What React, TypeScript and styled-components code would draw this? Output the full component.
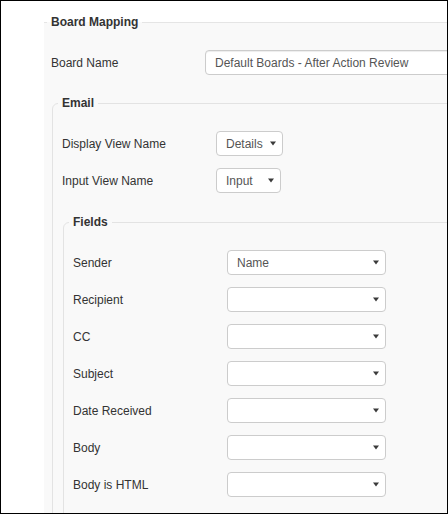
import React from "react";
import styled, { createGlobalStyle } from "styled-components";

const GlobalStyle = createGlobalStyle`
  html, body {
    margin: 0;
    padding: 0;
    background: #fff;
  }
  body {
    font-family: "Liberation Sans", Arial, sans-serif;
    font-size: 12px;
    color: #333;
  }
`;

const Frame = styled.div`
  width: 448px;
  height: 514px;
  box-sizing: border-box;
  border: 1px solid #000;
  background: #fff;
  overflow: hidden;
`;

type BoxProps = {
  $top: number;
  $left: number;
  $pad: number;
  $outer?: boolean;
};

const Box = styled.fieldset<BoxProps>`
  margin: ${(p) => p.$top}px 0 0 ${(p) => p.$left}px;
  padding: 21px 0 0 ${(p) => p.$pad}px;
  min-inline-size: 0;
  width: 560px;
  box-sizing: border-box;
  ${(p) =>
    p.$outer
      ? `border: 0; border-top: 1px solid #e5e5e5; background: #f9f9f9; height: 600px;`
      : `border: 1px solid #e3e3e3; border-radius: 6px 0 0 0; height: 600px;`}
`;

const Legend = styled.legend`
  font-weight: bold;
  font-size: 12px;
  line-height: 14px;
  color: #333;
  padding: 0 4px;
  margin-left: -4px;
`;

const Rows = styled.div`
  display: flex;
  flex-direction: column;
  gap: 12px;
`;

const Row = styled.div`
  display: flex;
  align-items: center;
  height: 25px;
`;

const Label = styled.div`
  width: 154px;
  flex: none;
  color: #333;
`;

const TextInput = styled.div`
  width: 320px;
  height: 25px;
  box-sizing: border-box;
  border: 1px solid #ccc;
  border-radius: 4px;
  background: #fff;
  box-shadow: inset 0 1px 1px rgba(0, 0, 0, 0.075);
  padding: 0 9px;
  display: flex;
  align-items: center;
  color: #555;
  white-space: nowrap;
`;

const Select = styled.div<{ $width: number }>`
  width: ${(p) => p.$width}px;
  height: 25px;
  box-sizing: border-box;
  border: 1px solid #ccc;
  border-radius: 4px;
  background: #fff;
  padding: 0 6px 0 9px;
  display: flex;
  align-items: center;
  justify-content: space-between;
  color: #555;
`;

const Caret = () => (
  <svg width="6" height="5" viewBox="0 0 6 5">
    <path d="M0 0.5 L6 0.5 L3 4.5 Z" fill="#3a3a3a" />
  </svg>
);

const Dropdown = ({ value, width }: { value?: string; width: number }) => (
  <Select $width={width}>
    <span>{value}</span>
    <Caret />
  </Select>
);

const fields = ["Sender", "Recipient", "CC", "Subject", "Date Received", "Body", "Body is HTML"];

export default function App() {
  return (
    <>
      <GlobalStyle />
      <Frame>
        <Box $outer $top={14} $left={43} $pad={7}>
          <Legend>Board Mapping</Legend>
          <Row>
            <Label>Board Name</Label>
            <TextInput>Default Boards - After Action Review</TextInput>
          </Row>

          <Box $top={21} $left={1} $pad={9}>
            <Legend>Email</Legend>
            <Rows>
              <Row>
                <Label>Display View Name</Label>
                <Dropdown value="Details" width={67} />
              </Row>
              <Row>
                <Label>Input View Name</Label>
                <Dropdown value="Input" width={65} />
              </Row>
            </Rows>

            <Box $top={22} $left={1} $pad={9}>
              <Legend>Fields</Legend>
              <Rows>
                {fields.map((name, i) => (
                  <Row key={name}>
                    <Label>{name}</Label>
                    <Dropdown value={i === 0 ? "Name" : ""} width={159} />
                  </Row>
                ))}
              </Rows>
            </Box>
          </Box>
        </Box>
      </Frame>
    </>
  );
}
